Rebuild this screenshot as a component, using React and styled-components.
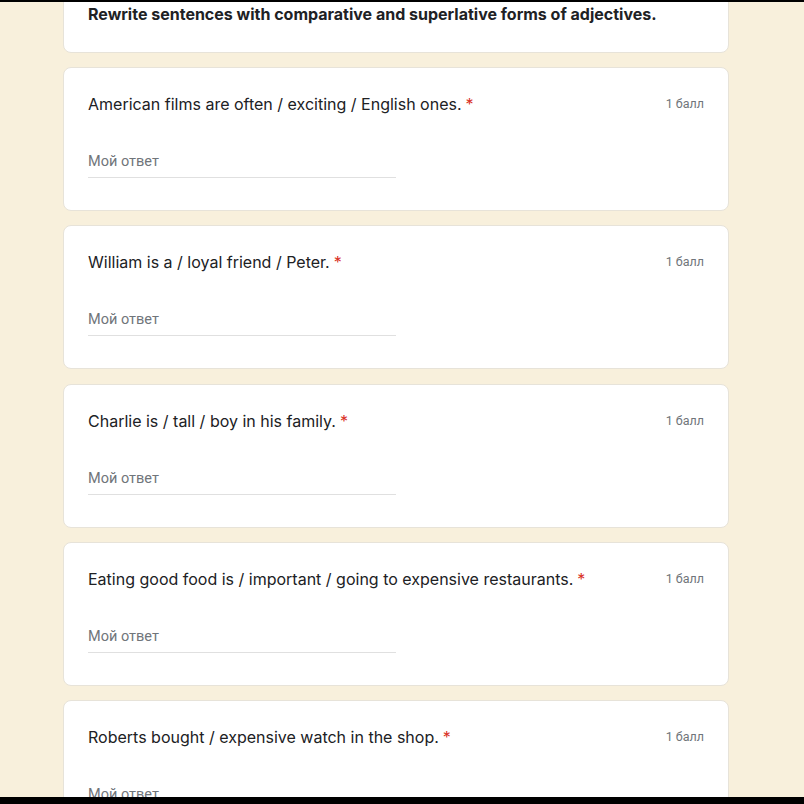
import React from "react";
import styled, { createGlobalStyle } from "styled-components";

const GlobalStyle = createGlobalStyle`
  html, body { margin: 0; padding: 0; background: #000; }
  body { font-family: Inter, Roboto, "Noto Sans", Arial, sans-serif; }
`;

const Viewport = styled.div`
  width: 804px;
  height: 804px;
  display: flex;
  flex-direction: column;
  background: #000;
  overflow: hidden;
`;

const TopBar = styled.div`
  height: 2px;
  flex: 0 0 2px;
  background: #000;
`;

const BottomBar = styled.div`
  height: 7px;
  flex: 0 0 7px;
  background: #000;
`;

const Scroll = styled.div`
  flex: 1;
  background: #f8f0dc;
  overflow: hidden;
`;

const List = styled.div`
  margin-top: -63.5px;
  padding-left: 63px;
  display: flex;
  flex-direction: column;
  gap: 14.4px;
`;

const Card = styled.div`
  width: 666px;
  box-sizing: border-box;
  background: #fff;
  border: 1px solid #e7e3d9;
  border-radius: 8px;
  padding: 24px 24px 32px;
`;

const HeaderText = styled.div`
  font-family: Inter, Roboto, sans-serif;
  font-size: 16px;
  font-weight: 700;
  line-height: 24px;
  color: #202124;
  padding-top: 38px;
  margin-bottom: -6px;
`;

const TitleRow = styled.div`
  display: flex;
  justify-content: space-between;
  align-items: center;
  height: 24px;
`;

const Question = styled.div`
  font-family: Inter, Roboto, sans-serif;
  font-size: 16px;
  line-height: 24px;
  color: #202124;
`;

const Star = styled.span`
  color: #d93025;
  margin-left: 4px;
`;

const Points = styled.div`
  font-family: Roboto, sans-serif;
  font-size: 12.5px;
  color: #70757a;
  line-height: 24px;
`;

const Answer = styled.div`
  margin-top: 36px;
  width: 308px;
  height: 25px;
  border-bottom: 1px solid #e0e0e0;
  font-family: Roboto, sans-serif;
  font-size: 14.5px;
  line-height: 20px;
  color: #70757a;
`;

const questions = [
  "American films are often / exciting / English ones.",
  "William is a / loyal friend / Peter.",
  "Charlie is / tall / boy in his family.",
  "Eating good food is / important / going to expensive restaurants.",
  "Roberts bought / expensive watch in the shop.",
];

export default function App() {
  return (
    <>
      <GlobalStyle />
      <Viewport>
        <TopBar />
        <Scroll>
          <List>
            <Card>
              <HeaderText>
                Rewrite sentences with comparative and superlative forms of adjectives.
              </HeaderText>
            </Card>
            {questions.map((q) => (
              <Card key={q}>
                <TitleRow>
                  <Question>
                    {q}
                    <Star>*</Star>
                  </Question>
                  <Points>1 балл</Points>
                </TitleRow>
                <Answer>Мой ответ</Answer>
              </Card>
            ))}
          </List>
        </Scroll>
        <BottomBar />
      </Viewport>
    </>
  );
}
